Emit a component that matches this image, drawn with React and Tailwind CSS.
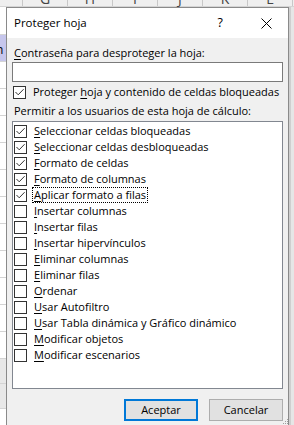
import React from "react";

const items = [
  ["S", "eleccionar celdas bloqueadas", true],
  ["S", "eleccionar celdas desbloqueadas", true],
  ["F", "ormato de celdas", true],
  ["F", "ormato de columnas", true],
  ["A", "plicar formato a filas", true, true],
  ["I", "nsertar columnas", false],
  ["I", "nsertar filas", false],
  ["I", "nsertar hipervínculos", false],
  ["E", "liminar columnas", false],
  ["E", "liminar filas", false],
  ["O", "rdenar", false],
  ["U", "sar Autofiltro", false],
  ["U", "sar Tabla dinámica y Gráfico dinámico", false],
  ["M", "odificar objetos", false],
  ["M", "odificar escenarios", false],
];

function Box({ checked }) {
  return (
    <span className="w-[13px] h-[13px] border border-[#333333] bg-white flex items-center justify-center shrink-0">
      {checked && (
        <svg width="11" height="11" viewBox="0 0 11 11">
          <path d="M1.5 5 L4.2 7.8 L9.6 2.2" fill="none" stroke="#333333" strokeWidth="1" />
        </svg>
      )}
    </span>
  );
}

const cols = ["G", "H", "I", "J", "K", "L"];

export default function App() {
  return (
    <div className="relative w-[294px] h-[425px] overflow-hidden bg-white font-['Open_Sans',sans-serif] text-[11px] text-black">
      {/* Excel background */}
      <div className="flex flex-col w-full h-full">
        <div className="flex h-[20px] mt-[-13px] bg-[#efefef] border-b border-[#d4d4d4] shrink-0">
          <div className="w-[23px] border-r border-[#c8c8c8] shrink-0" />
          {cols.map((c) => (
            <div key={c} className="w-[45px] shrink-0 border-r border-[#c8c8c8] flex items-end justify-center leading-[14px] text-[#444] text-[14px]">
              {c}
            </div>
          ))}
        </div>
        <div className="flex-1 flex justify-between">
          <div className="w-[6px] flex flex-col">
            <div className="h-[28px] border-b border-[#d4d4d4]" />
            <div className="h-[27px] border-b border-[#d4d4d4] bg-[#c6c6ec] flex items-end text-[12px] leading-[16px] pb-[3px]"><span className="ml-[-4px]">n</span></div>
            <div className="h-[27px] border-b border-[#d4d4d4]" />
            <div className="h-[27px] border-b border-[#d4d4d4]" />
            <div className="h-[27px] border-b border-[#d4d4d4]" />
            <div className="h-[27px] border-b border-[#d4d4d4]" />
            <div className="h-[27px] border-b border-[#d4d4d4]" />
            <div className="h-[27px] border-b border-[#d4d4d4]" />
            <div className="h-[27px] border-b border-[#d4d4d4]" />
            <div className="h-[27px] border-b border-[#d4d4d4]" />
            <div className="h-[27px] border-b border-[#d4d4d4]" />
            <div className="h-[27px] border-b border-[#d4d4d4]" />
            <div className="h-[27px] border-b border-[#d4d4d4]" />
            <div className="h-[25px] border-b border-[#d4d4d4] bg-[#e8e8e8]" />
            <div className="h-[25px] border-b border-[#d4d4d4] bg-[#e8e8e8]" />
          </div>
          <div className="w-[5px] bg-[#e6e6e6] border-l-2 border-[#cfcfcf]" />
        </div>
      </div>

      {/* Dialog */}
      <div className="absolute left-[6px] top-[7px] w-[283px] h-[430px] border border-[#8a8a8a] bg-[#f0f0f0] flex flex-col">
        <div className="h-[30px] bg-white flex items-center pl-[7px] pr-[16px] shrink-0">
          <span className="flex-1 text-[11.5px]">Proteger hoja</span>
          <span className="mr-[38px] text-[12.5px]">?</span>
          <svg width="11" height="11" viewBox="0 0 11 11">
            <path d="M0.5 0.5 L10.5 10.5 M10.5 0.5 L0.5 10.5" stroke="#000" strokeWidth="1" />
          </svg>
        </div>
        <div className="flex flex-col px-[5px] pt-[7px]">
          <div className="leading-[16px] pl-[2px] pb-[1px]">
            <u className="underline-offset-2">C</u>ontraseña para desproteger la hoja:
          </div>
          <div className="h-[20px] border border-[#7a7a7a] bg-white" />
          <div className="flex items-center h-[16px] mt-[2px] pl-[1px] gap-[7px]">
            <Box checked />
            <span className="leading-[15px] pb-[1px] whitespace-nowrap">
              Proteger <u className="underline-offset-2">h</u>oja y contenido de celdas bloqueadas
            </span>
          </div>
          <div className="leading-[16px] mt-[3px] pl-[2px] whitespace-nowrap">
            Permitir a los usuarios de esta hoja de cálculo:
          </div>
          <div className="h-[268px] mt-[2px] border border-[#828790] bg-white pt-[1px] pl-[1px] flex flex-col">
            {items.map(([k, rest, checked, focus], i) => (
              <div key={i} className="flex items-center h-[16px] gap-[5px]">
                <Box checked={checked} />
                <span className={"leading-[13px] pb-[1px] px-[1px] border whitespace-nowrap " + (focus ? "border-dotted border-black" : "border-transparent")}>
                  <u className="underline-offset-2">{k}</u>
                  {rest}
                </span>
              </div>
            ))}
          </div>
          <div className="flex justify-end gap-[11px] mt-[10px]">
            <div className="w-[74px] h-[22px] border-2 border-[#0078d7] bg-[#e1e1e1] flex items-center justify-center">Aceptar</div>
            <div className="w-[74px] h-[22px] border border-[#adadad] bg-[#e1e1e1] flex items-center justify-center">Cancelar</div>
          </div>
        </div>
      </div>
      <svg className="absolute left-[283px] top-[419px]" width="6" height="6" viewBox="0 0 6 6">
        <rect x="4" y="0" width="1" height="1" fill="#a0a0a0" />
        <rect x="2" y="2" width="1" height="1" fill="#a0a0a0" />
        <rect x="4" y="2" width="1" height="1" fill="#a0a0a0" />
        <rect x="0" y="4" width="1" height="1" fill="#a0a0a0" />
        <rect x="2" y="4" width="1" height="1" fill="#a0a0a0" />
        <rect x="4" y="4" width="1" height="1" fill="#a0a0a0" />
      </svg>
    </div>
  );
}
